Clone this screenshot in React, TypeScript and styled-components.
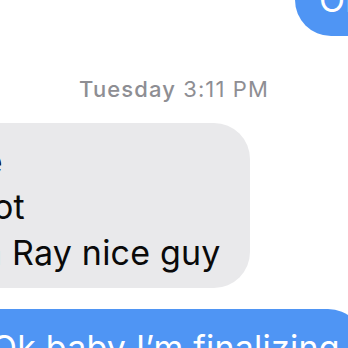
import { createGlobalStyle, styled } from "styled-components";

const GlobalStyle = createGlobalStyle`
  html, body {
    margin: 0;
    padding: 0;
    background: #ffffff;
  }
`;

const StyledScreen = styled.div`
  display: flex;
  flex-direction: column;
  width: 348px;
  height: 348px;
  overflow: hidden;
  background: #ffffff;
  font-family: Inter, "Noto Sans", sans-serif;
`;

const StyledBubble = styled.div<{ $outgoing?: boolean }>`
  display: flex;
  flex-direction: column;
  flex-shrink: 0;
  width: fit-content;
  padding: 16px 24px 13px;
  border-radius: 36px;
  background: ${({ $outgoing }) => ($outgoing ? "#4f95f4" : "#e9e9eb")};
  color: ${({ $outgoing }) => ($outgoing ? "#ffffff" : "#0a0a0a")};
  font-size: 34px;
  line-height: 45.5px;
  letter-spacing: 0.2px;
  white-space: nowrap;
`;

const StyledTopBubble = styled(StyledBubble)`
  align-self: flex-end;
  margin: -39px -40px 0 0;
`;

const StyledIncomingBubble = styled(StyledBubble)`
  align-self: flex-start;
  margin: 21px 0 0 -120px;
  padding-right: 29px;
`;

const StyledBottomBubble = styled(StyledBubble)`
  align-self: flex-start;
  margin: 21px 0 0 -33px;
`;

const StyledLine = styled.div`
  white-space: nowrap;
`;

const StyledTimestamp = styled.div`
  align-self: center;
  margin-top: 40px;
  color: #8e8e93;
  font-size: 22px;
  line-height: 26px;
  letter-spacing: 1.1px;
`;

const StyledDay = styled.span`
  font-weight: 500;
`;

const App = () => {
  return (
    <>
      <GlobalStyle />
      <StyledScreen>
        <StyledTopBubble $outgoing>
          <StyledLine>Ok</StyledLine>
        </StyledTopBubble>

        <StyledTimestamp>
          <StyledDay>Tuesday</StyledDay> 3:11 PM
        </StyledTimestamp>

        <StyledIncomingBubble>
          <StyledLine>Is fine</StyledLine>
          <StyledLine>Yes hot</StyledLine>
          <StyledLine>He’s a Ray nice guy</StyledLine>
        </StyledIncomingBubble>

        <StyledBottomBubble $outgoing>
          <StyledLine>Ok baby I’m finalizing</StyledLine>
        </StyledBottomBubble>
      </StyledScreen>
    </>
  );
};

export default App;
